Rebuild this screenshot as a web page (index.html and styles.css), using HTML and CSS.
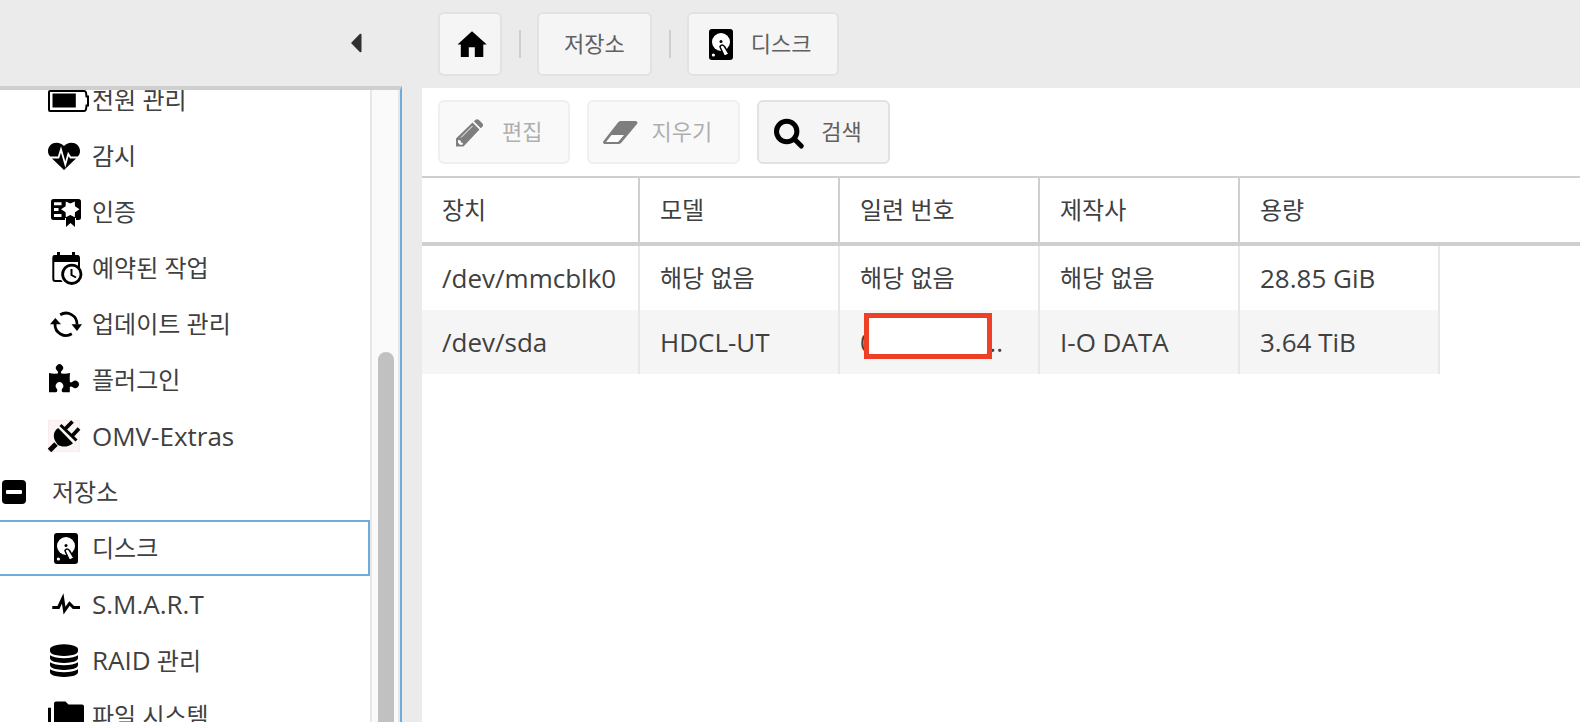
FILE: index.html
```html
<!DOCTYPE html>
<html lang="ko">
<head>
    <meta charset="UTF-8">
    <meta name="viewport" content="width=device-width, initial-scale=1.0">
    <title>디스크</title>
    <link rel="stylesheet" href="styles.css">
</head>
<body>
    <svg class="sprite" aria-hidden="true">
        <symbol id="icon-disk" viewBox="0 0 32 32">
            <rect x="6" y="1" width="24" height="31" rx="3"/>
            <circle cx="18" cy="14" r="9" fill="#fff"/>
            <circle cx="18" cy="13.500" r="1.500"/>
            <path d="M17 18.500Q19 15.500 21.500 18.500L26 26L21.500 28.500L17.500 20Z" fill="#fff" stroke="#000" stroke-width="1.500"/>
            <circle cx="10.400" cy="27" r="1.600" fill="#fff"/>
        </symbol>
    </svg>

    <div class="layout">
        <aside class="sidebar">
            <div class="sidebar-header">
                <button class="collapse" type="button" aria-label="Collapse">
                    <svg width="12" height="20" viewBox="0 0 12 20"><path d="M1 10 10 0.800 11.500 1V19L10 19.200Z" fill="#303030"/></svg>
                </button>
            </div>
            <div class="sidebar-body">
                <nav class="tree">
                    <ul>
                        <li><a href="#">
                            <svg class="icon" viewBox="0 0 32 32"><path d="M2 7H36Q37.500 7 38 8.500L38.500 12.500H40V21.500H38.500L38 25.500Q37.500 27 36 27H2Q1 27 1 26V8Q1 7 2 7Z" fill="none" stroke="#000" stroke-width="2"/><path d="M4.500 9.500H27.800V23.500H4.500Z"/></svg>
                            전원 관리</a></li>
                        <li><a href="#">
                            <svg class="icon" viewBox="0 0 32 32"><path d="M16 30 4 18.500C1 15.500 0 14 0 11 0 6 4 2.700 8.500 2.700c3 0 6 1.300 7.500 3.300 1.500-2 4.500-3.300 7.500-3.300C28 2.700 32 6 32 11c0 3-1 4.500-4 7.500Z"/><path d="M2 17.500H10.500L13 9.500 17.300 24.500 20.300 14 22.500 17.500H30" fill="none" stroke="#fff" stroke-width="1.800"/></svg>
                            감시</a></li>
                        <li><a href="#">
                            <svg class="icon" viewBox="0 0 32 32"><rect x="3" y="3" width="30" height="21" rx="2.500"/><path d="M17 22H28V32L22.500 27.500 17 32Z" fill="#fff"/><path d="M18 21H27V31L22.500 27 18 31Z"/><path d="M6 6.300H13.500V9.300H6ZM6 12H10.500V15H6ZM6 18H13.500V21H6Z" fill="#fff"/><path d="M26.800 5.500 27 10.300 31.500 13.300 27 16.300 26.800 21.200 22.300 19 17.800 21.200 17.600 16.300 13 13.300 17.600 10.300 17.800 5.500 22.300 7.600Z" fill="#fff"/></svg>
                            인증</a></li>
                        <li><a href="#">
                            <svg class="icon" viewBox="0 0 32 32"><path d="M9 0H12V5H9ZM24 0H27V5H24Z"/><rect x="5.300" y="4" width="25.700" height="25" rx="2" fill="#fff" stroke="#000" stroke-width="2"/><circle cx="23.800" cy="22.300" r="12" fill="#fff"/><path d="M30 10H32V18H30Z"/><path d="M5 3.500H31V10H5Z"/><circle cx="23.800" cy="22.300" r="9.200" fill="#fff" stroke="#000" stroke-width="2.800"/><path d="M23.500 17V23L28 25.500" fill="none" stroke="#000" stroke-width="2"/></svg>
                            예약된 작업</a></li>
                        <li><a href="#">
                            <svg class="icon" viewBox="0 0 32 32"><path d="M12.200 6.800A11 11 0 0 1 29 16.500M23.800 25.800A11 11 0 0 1 7 16" fill="none" stroke="#000" stroke-width="2.800"/><path d="M23.500 16.300H34L29 23ZM2 16.300H13L7.300 10Z"/></svg>
                            업데이트 관리</a></li>
                        <li><a href="#">
                            <svg class="icon" viewBox="0 0 32 32"><path d="M1 9Q5 10 9.500 9.500C10.500 8.800 10 7.500 9 6.500A3.600 3.600 0 1 1 14 6.500C13 7.500 12.500 8.800 13.500 9.500Q18 10 22 9Q21.500 13 21.800 17.500C22.500 19 24 18.500 24.800 17.600A3.700 3.700 0 1 1 24.800 23.200C24 22.300 22.500 22 21.800 23V28.300H15C13.500 28 13.500 26.500 14 25A3.700 4 0 1 0 9 25C9.500 26.500 9.500 28 8 28.300H1Z"/></svg>
                            플러그인</a></li>
                        <li><a href="#">
                            <svg class="icon" viewBox="0 0 32 32"><rect x="0.500" y="0.500" width="31" height="31" fill="#faf5f4" stroke="#faecec"/><path d="M10.200 8C5.500 11 4.500 16.500 7.500 21.500L9.500 24.500C14 27.800 20.500 27 25 23.200Z"/><path d="M12.500 5 28.500 20.500" stroke="#000" stroke-width="3"/><path d="M17.500 8.500 24.500 1.500M24.500 15.500 31 8.500" stroke="#000" stroke-width="3.800"/><path d="M1.500 30.500 8 24" stroke="#000" stroke-width="5"/></svg>
                            <span class="latin">OMV-Extras</span></a></li>
                        <li class="group">
                            <button type="button" aria-label="Toggle"><svg width="24" height="24" viewBox="0 0 24 24"><rect width="24" height="24" rx="4"/><rect x="4" y="10" width="16" height="4" rx="1" fill="#fff"/></svg></button>
                            <span>저장소</span></li>
                        <li><a href="#" class="selected">
                            <svg class="icon"><use href="#icon-disk"/></svg>
                            디스크</a></li>
                        <li><a href="#">
                            <svg class="icon" viewBox="0 0 32 32"><path d="M4.300 19.500H10.500L14.700 10.500 16.500 22.500 21.500 15.500 25.500 19.500H32" fill="none" stroke="#000" stroke-width="3" stroke-miterlimit="8"/></svg>
                            <span class="latin">S.M.A.R.T</span></a></li>
                        <li><a href="#">
                            <svg class="icon" viewBox="0 0 32 32"><path transform="translate(2 0.300) scale(0.01823)" d="M768 768q237 0 443-43t325-127v170q0 69-103 128t-280 93.500-385 34.500-385-34.500-280-93.500-103-128v-170q119 84 325 127t443 43zm0 768q237 0 443-43t325-127v170q0 69-103 128t-280 93.500-385 34.500-385-34.500-280-93.500-103-128v-170q119 84 325 127t443 43zm0-384q237 0 443-43t325-127v170q0 69-103 128t-280 93.500-385 34.500-385-34.500-280-93.500-103-128v-170q119 84 325 127t443 43zm0-1152q208 0 385 34.500t280 93.500 103 128v128q0 69-103 128t-280 93.500-385 34.500-385-34.500-280-93.500-103-128v-128q0-69 103-128t280-93.500 385-34.500z"/></svg>
                            <span><span class="latin">RAID</span> 관리</span></a></li>
                        <li><a href="#">
                            <svg class="icon" viewBox="0 0 32 32"><path d="M8 1.500H17.500L20.500 4.500H34Q36 4.500 36 6.500V26H6V3.500Q6 1.500 8 1.500ZM0 7.700H3V29H32V32H0Z"/></svg>
                            파일 시스템</a></li>
                    </ul>
                </nav>
                <div class="scrollbar"><div class="thumb"></div></div>
            </div>
        </aside>

        <main class="content">
            <nav class="breadcrumb">
                <button class="button home" type="button" aria-label="Home">
                    <svg class="icon" viewBox="0 0 32 32"><path d="M18 3.200 32.800 16.500H29.300V29H20.800V19.300H14.800V29H6.800V16.500H3.500Z"/></svg>
                </button>
                <span class="separator"></span>
                <button class="button" type="button"><span>저장소</span></button>
                <span class="separator"></span>
                <button class="button with-icon" type="button"><svg class="icon"><use href="#icon-disk"/></svg><span>디스크</span></button>
            </nav>
            <section class="panel">
                <div class="toolbar">
                    <button class="button with-icon" type="button" disabled>
                        <svg class="icon" viewBox="0 0 32 32"><path d="M2 22.500 18.500 6.500 25.500 13.500 9.500 30.500H2ZM19.800 5.200 22 3.500Q23.500 2.700 25 4L28.500 7.500Q29.800 9 28.800 10.200L26.800 12.200Z"/><path d="M7 21.500 18.500 10" stroke="#fff"/><path d="M4 24 6.500 24.500 7 26.500 9 27 8.500 28.700H6L4 26.500Z" fill="#fff"/></svg>
                        <span>편집</span>
                    </button>
                    <button class="button with-icon" type="button" disabled>
                        <svg class="icon" viewBox="0 0 32 32"><path d="M17.500 5H32.500Q35.500 5.500 34 8L18.500 26.500Q17 28 15.500 28H2Q-1 27.500 0.500 25L15 6.500Q16 5 17.500 5Z"/><path d="M8.500 19H21L15.500 25.500Q15 26 14.500 26H3Z" fill="#fff"/></svg>
                        <span>지우기</span>
                    </button>
                    <button class="button with-icon" type="button">
                        <svg class="icon" viewBox="0 0 32 32"><circle cx="13.700" cy="15.500" r="10.200" fill="none" stroke="#000" stroke-width="5"/><path d="M21 22.800 28.300 30.100" stroke="#000" stroke-width="5" stroke-linecap="round"/></svg>
                        <span>검색</span>
                    </button>
                </div>
                <table class="grid">
                    <colgroup>
                        <col class="col-device">
                        <col class="col-data">
                        <col class="col-data">
                        <col class="col-data">
                        <col class="col-data">
                        <col>
                    </colgroup>
                    <thead>
                        <tr>
                            <th>장치</th>
                            <th>모델</th>
                            <th>일련 번호</th>
                            <th>제작사</th>
                            <th>용량</th>
                            <td></td>
                        </tr>
                    </thead>
                    <tbody>
                        <tr>
                            <td class="latin">/dev/mmcblk0</td>
                            <td>해당 없음</td>
                            <td>해당 없음</td>
                            <td>해당 없음</td>
                            <td class="latin">28.85 GiB</td>
                            <td></td>
                        </tr>
                        <tr>
                            <td class="latin">/dev/sda</td>
                            <td class="latin">HDCL-UT</td>
                            <td class="latin"><div class="serial"><span>0</span><span>...</span><div class="mask"></div></div></td>
                            <td class="latin">I-O DATA</td>
                            <td class="latin">3.64 TiB</td>
                            <td></td>
                        </tr>
                    </tbody>
                </table>
            </section>
        </main>
    </div>
</body>
</html>
```
FILE: styles.css
```css
* {
    box-sizing: border-box;
}
body {
    margin: 0;
    background-color: #ebebeb;
    color: #404040;
    font-family: "Open Sans", "Noto Sans CJK KR", sans-serif;
    font-size: 24px;
    line-height: 32px;
}
button {
    font-family: inherit;
    color: inherit;
}
.sprite {
    display: none;
}
.icon {
    width: 32px;
    height: 32px;
    flex: none;
    overflow: visible;
}
.latin {
    font-size: 26px;
}
.layout {
    display: flex;
    height: 100vh;
    overflow: hidden;
}

/* Navigation */
.sidebar {
    display: flex;
    flex-direction: column;
    flex: none;
    width: 402px;
    margin-right: 20px;
}
.sidebar-header {
    display: flex;
    align-items: center;
    justify-content: flex-end;
    flex: none;
    height: 86px;
    padding-right: 40px;
}
.collapse {
    display: flex;
    padding: 0;
    border: 0;
    background: none;
}
.sidebar-body {
    display: flex;
    flex: 1;
    min-height: 0;
    border-top: 4px solid #cfcfcf;
    border-right: 2px solid #6fabdc;
    background-color: #fff;
}
.tree {
    flex: 1;
    overflow: hidden;
}
.tree ul {
    /* the list is scrolled a little */
    margin: -18px 0 0;
    padding: 0;
    list-style: none;
}
.tree a {
    display: flex;
    align-items: center;
    gap: 12px;
    height: 56px;
    padding-left: 48px;
    border: solid transparent;
    border-width: 2px 2px 2px 0;
    color: inherit;
    text-decoration: none;
    white-space: nowrap;
}
.tree a.selected {
    border-color: #6fabdc;
}
.tree .group {
    display: flex;
    align-items: center;
    gap: 26px;
    height: 56px;
    padding-left: 2px;
}
.group button {
    display: flex;
    padding: 0;
    border: 0;
    background: none;
}
.scrollbar {
    width: 30px;
    padding: 262px 4px 0 6px;
    border: solid #e7e7e7;
    border-width: 0 2px;
    background-color: #fafafa;
}
.thumb {
    width: 16px;
    height: 100%;
    border-radius: 8px 8px 0 0;
    background-color: #c1c1c1;
}

/* Breadcrumb and toolbar */
.content {
    display: flex;
    flex-direction: column;
    flex: 1;
    min-width: 0;
}
.breadcrumb {
    display: flex;
    align-items: center;
    gap: 16px;
    flex: none;
    height: 88px;
    padding-left: 16px;
}
.separator {
    width: 2px;
    height: 28px;
    margin-left: 1px;
    background-color: #cfcfcf;
}
.button {
    display: flex;
    align-items: center;
    gap: 16px;
    height: 64px;
    padding: 0 25px;
    border: 2px solid #e2e2e2;
    border-radius: 6px;
    background-color: #f5f5f5;
    color: #606060;
    font-size: 22px;
}
.button span {
    padding-bottom: 4px;
}
.button.home {
    padding: 0 14px;
}
.button.with-icon {
    padding: 0 26px 0 14px;
}
.button:disabled {
    opacity: 0.5;
}
.panel {
    flex: 1;
    background-color: #fff;
}
.toolbar {
    display: flex;
    gap: 17px;
    padding: 12px 16px;
}

/* Disks */
.grid {
    width: 100%;
    table-layout: fixed;
    border-top: 2px solid #cfcfcf;
    border-spacing: 0;
}
.col-device {
    width: 218px;
}
.col-data {
    width: 200px;
}
.grid th,
.grid td {
    height: 64px;
    padding: 0 18px 0 20px;
    font-weight: normal;
    text-align: left;
    white-space: nowrap;
}
.grid thead th,
.grid thead td {
    height: 68px;
    border-bottom: 4px solid #cfcfcf;
}
.grid th {
    border-right: 2px solid #cfcfcf;
}
.grid th:nth-child(5) {
    border-right: 0;
}
.grid tbody td {
    border-right: 2px solid #e7e7e7;
}
.grid tbody td:last-child {
    border-right: 0;
}
.grid tbody tr:nth-child(even) td:not(:last-child) {
    background-color: #f5f5f5;
}
.serial {
    display: flex;
    justify-content: space-between;
    position: relative;
    width: 143px;
}
.mask {
    position: absolute;
    top: -13px;
    left: 4px;
    width: 128px;
    height: 46px;
    border: 5px solid #ee4027;
    background-color: #fff;
}
```
